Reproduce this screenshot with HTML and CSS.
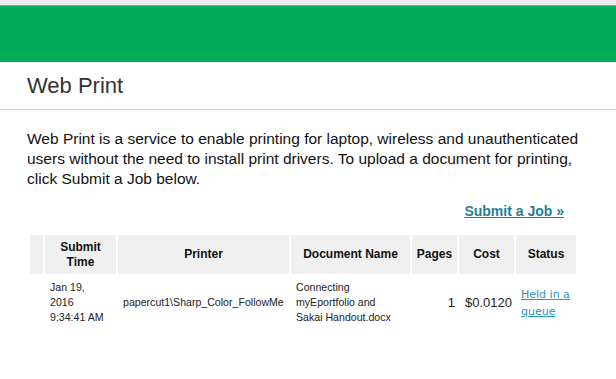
FILE: index.html
```html
<!DOCTYPE html>
<html lang="en">
<head>
    <meta charset="UTF-8">
    <meta name="viewport" content="width=device-width, initial-scale=1.0">
    <title>Web Print</title>
    <link rel="stylesheet" href="styles.css">
</head>
<body>
    <div class="topbar"></div>
    <div class="banner"></div>
    <div class="page-title">
        <h1>Web Print</h1>
    </div>
    <div class="content">
        <p class="intro">Web Print is a service to enable printing for laptop, wireless and unauthenticated users without the need to install print drivers. To upload a document for printing, click Submit a Job below.</p>
        <div class="actions">
            <a href="#" class="submit-link">Submit a Job &raquo;</a>
        </div>
        <table class="jobs">
            <colgroup>
                <col class="c-blank">
                <col class="c-time">
                <col class="c-printer">
                <col class="c-doc">
                <col class="c-pages">
                <col class="c-cost">
                <col class="c-status">
            </colgroup>
            <thead>
                <tr>
                    <th></th>
                    <th>Submit<br>Time</th>
                    <th>Printer</th>
                    <th>Document Name</th>
                    <th>Pages</th>
                    <th>Cost</th>
                    <th>Status</th>
                </tr>
            </thead>
            <tbody>
                <tr>
                    <td></td>
                    <td class="small">Jan 19,<br>2016<br>9:34:41 AM</td>
                    <td class="small">papercut1\Sharp_Color_FollowMe</td>
                    <td class="small">Connecting<br>myEportfolio and<br>Sakai Handout.docx</td>
                    <td class="num">1</td>
                    <td class="num">$0.0120</td>
                    <td><a href="#" class="status-link">Held in a queue</a></td>
                </tr>
            </tbody>
        </table>
    </div>
</body>
</html>
```

FILE: styles.css
```css
body {
    margin: 0;
    font-family: 'Liberation Sans', Arial, sans-serif;
    color: #222;
    background: white;
}
.topbar {
    height: 5px;
    background: #ebebef;
    border-bottom: 1px solid #9a9a9a;
}
.banner {
    height: 56px;
    background: #00ab5a;
}
.page-title {
    border-bottom: 1px solid #cccccc;
    padding: 0 27px;
}
.page-title h1 {
    margin: 0;
    font-size: 22px;
    font-weight: normal;
    line-height: 47px;
    color: #333;
}
.content {
    padding: 0 27px;
}
.intro {
    margin: 19px 0 0;
    font-size: 15.5px;
    line-height: 20px;
    color: #111;
}
.actions {
    text-align: right;
    padding-right: 25px;
    margin-top: 13px;
    line-height: 18px;
}
.submit-link {
    font-size: 14px;
    font-weight: bold;
    color: #1f7f9a;
}
.jobs {
    margin: 13px 0 0 1px;
    table-layout: fixed;
    width: 550px;
    border-spacing: 2px;
}
.c-blank { width: 13px; }
.c-time { width: 71px; }
.c-printer { width: 171px; }
.c-doc { width: 119px; }
.c-pages { width: 45px; }
.c-cost { width: 55px; }
.c-status { width: 60px; }
.jobs th {
    background: #f0f0f0;
    font-size: 12px;
    line-height: 15px;
    height: 39px;
    padding: 0 4px;
    color: #111;
}
.jobs td {
    padding: 4px 5px;
    vertical-align: middle;
    font-size: 13px;
}
.jobs td.small {
    font-size: 10.6px;
    line-height: 15px;
}
.jobs td.num {
    text-align: right;
    padding-right: 2px;
}
.status-link {
    font-family: 'DejaVu Sans', Verdana, sans-serif;
    font-size: 11px;
    line-height: 16px;
    color: #2b95c0;
}
```
